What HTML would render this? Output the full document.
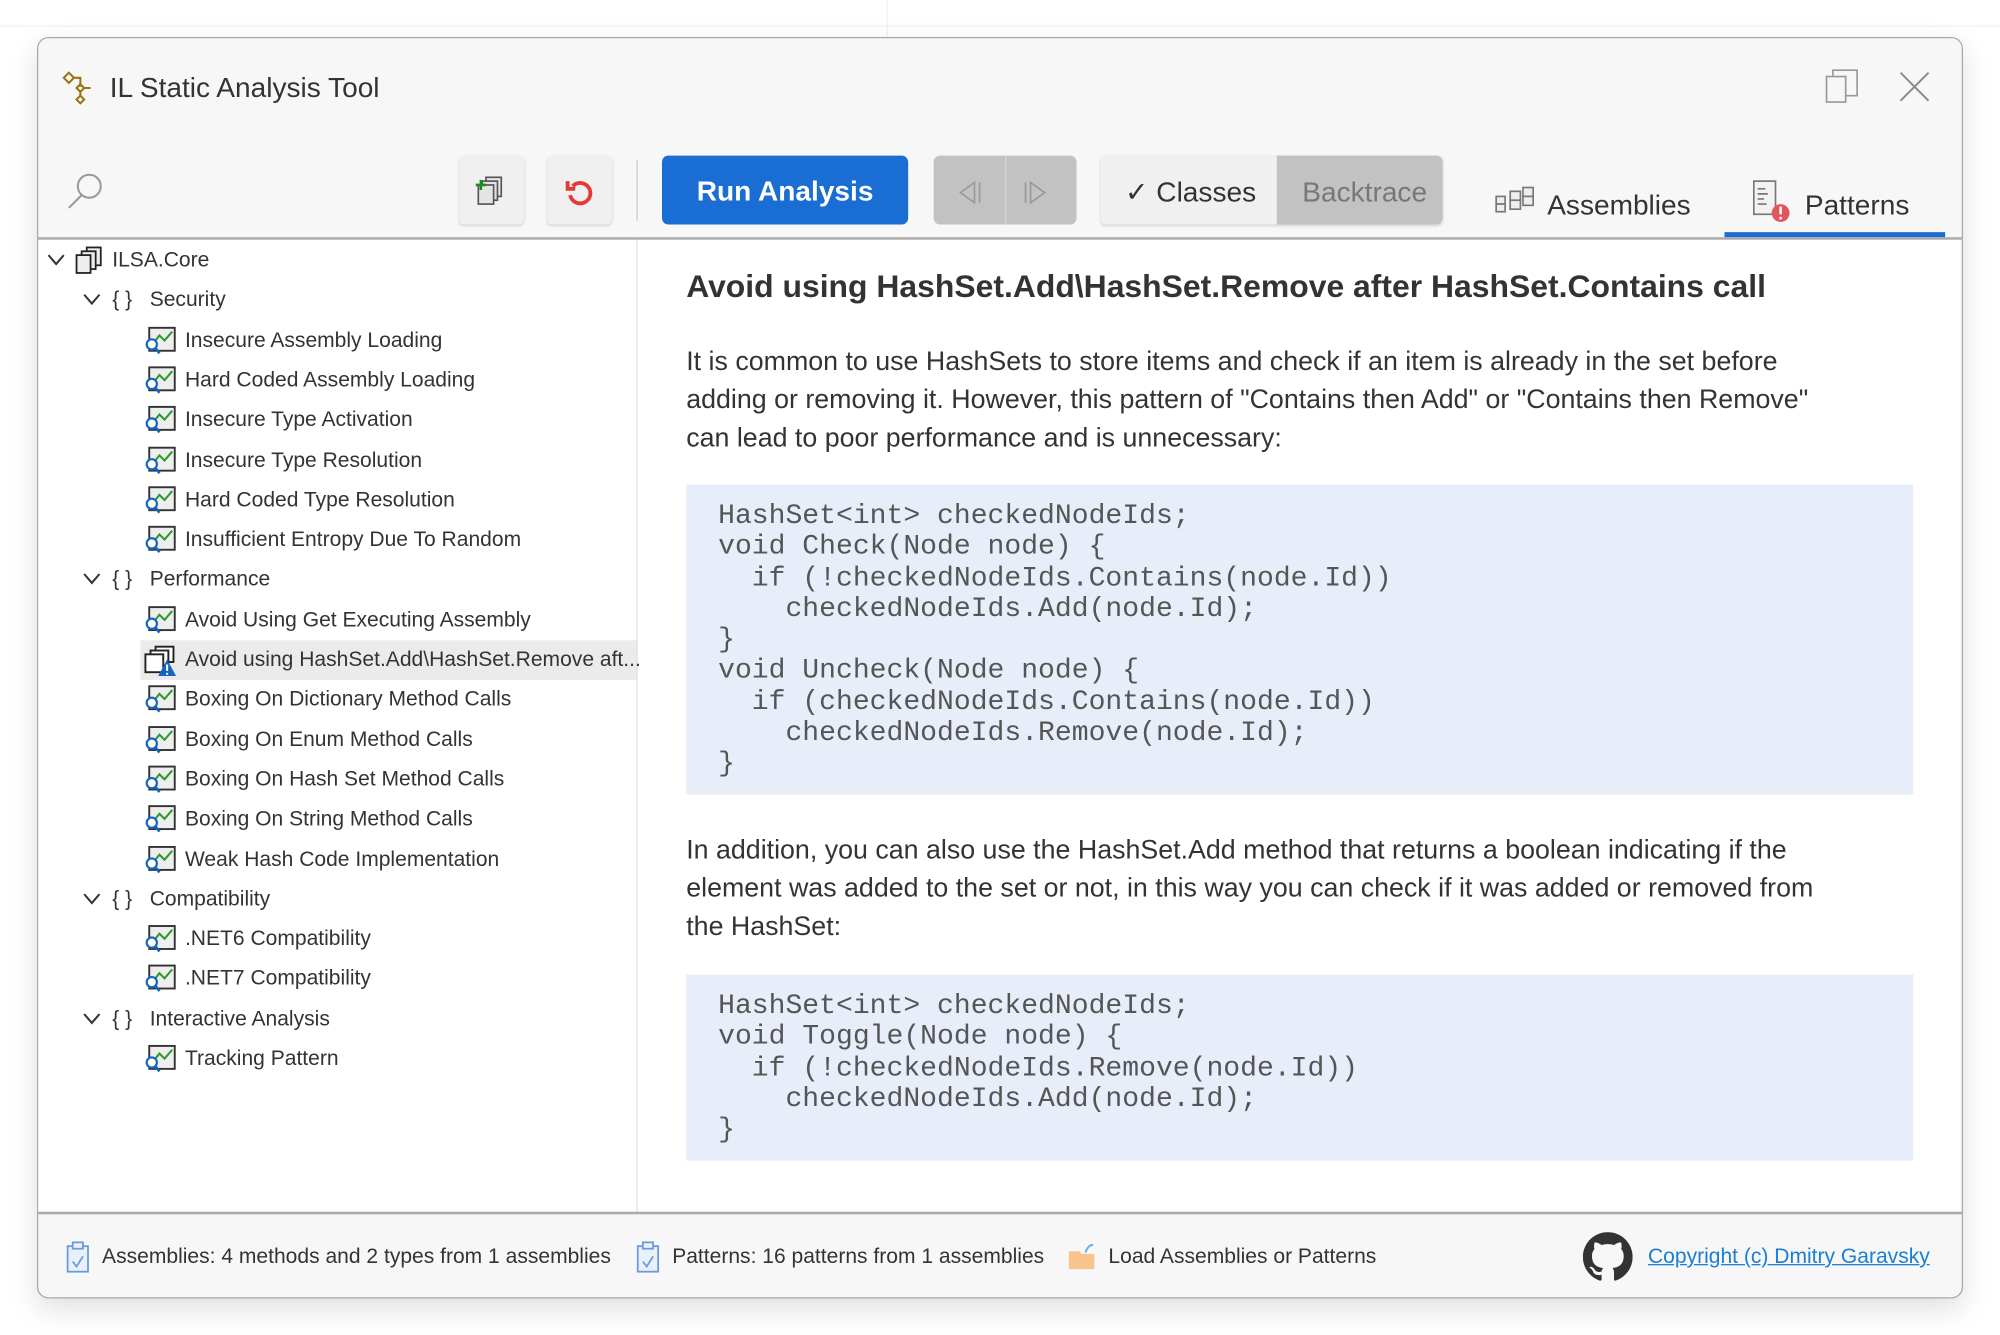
<!DOCTYPE html>
<html><head><meta charset="utf-8"><style>
html,body{margin:0;padding:0;width:2000px;height:1335px;overflow:hidden;background:#fff;}
#s{position:absolute;left:0;top:0;width:1568px;height:1047px;transform:scale(1.27551);transform-origin:0 0;font-family:"Liberation Sans",sans-serif;color:#333;}
.a{position:absolute;}
.win{left:29px;top:29px;width:1508px;height:987px;border:1px solid #a9a9a9;border-radius:9px;background:#f7f7f7;box-shadow:0 8px 22px rgba(0,0,0,.13);overflow:hidden;}
.btn{background:#f0f0f0;border-radius:4px;box-shadow:0 1px 2px rgba(0,0,0,.15);}
.row{position:absolute;font-size:16.5px;white-space:nowrap;color:#333;height:31px;line-height:31px;}
.p{font-size:21px;line-height:30px;color:#333;}
pre{margin:0;font-family:"Liberation Mono",monospace;font-size:22px;line-height:24.3px;color:#555;}
.code{background:#e7eef9;}
.st{font-size:16.5px;color:#333;position:absolute;top:976px;white-space:nowrap;}
</style></head><body><div id="s">
<div class="a" style="left:0;top:20px;width:1568px;height:1px;background:#f2f2f2"></div>
<div class="a" style="left:695px;top:0;width:1px;height:29px;background:#f0f0f0"></div>
<div class="a win"></div>
<svg class="a" style="left:49px;top:56px" width="26" height="26" viewBox="0 0 26 26" fill="none" stroke="#9a7410" stroke-width="1.6"><path d="M5 1 L9 5 L5 9 L1 5Z"/><path d="M9 5 H14 V12"/><path d="M14 10 L17 13 L14 16 L11 13Z"/><path d="M14 16 V19"/><path d="M14 19 L17 22 L14 25 L11 22Z"/><path d="M17 13 H22"/></svg>
<div class="a" style="left:86px;top:56px;font-size:22px;color:#333">IL Static Analysis Tool</div>
<svg class="a" style="left:1431px;top:54px" width="28" height="28" fill="none" stroke="#999" stroke-width="1.3"><rect x="1" y="6" width="15" height="20"/><path d="M6 6 V1 H25 V21 H16"/></svg>
<svg class="a" style="left:1488px;top:56px" width="26" height="24" stroke="#888" stroke-width="1.5"><path d="M2 1 L24 23 M24 1 L2 23"/></svg>
<svg class="a" style="left:52px;top:133px" width="32" height="32" fill="none" stroke="#999" stroke-width="1.6"><circle cx="18" cy="13" r="9"/><path d="M12 20 L2 30"/></svg>
<div class="a btn" style="left:360px;top:122px;width:51px;height:54px"></div>
<svg class="a" style="left:372px;top:137px" width="26" height="26" fill="#e4e4e4" stroke="#555" stroke-width="1.3"><rect x="9" y="2" width="12" height="15"/><rect x="6" y="5" width="12" height="15"/><rect x="3" y="8" width="12" height="15"/><path d="M1 8 H9 M5 4 V12" stroke="#1a8a1a" stroke-width="2"/></svg>
<div class="a btn" style="left:429px;top:122px;width:51px;height:54px"></div>
<svg class="a" style="left:442px;top:138px" width="26" height="26" fill="none" stroke="#e53935" stroke-width="3"><path d="M7 8 A8 8 0 1 1 5 15"/><path d="M3 4 V10 H9" stroke-width="3"/></svg>
<div class="a" style="left:499px;top:125px;width:1px;height:48px;background:#ccc"></div>
<div class="a" style="left:519px;top:122px;width:193px;height:54px;background:#1a6dd2;border-radius:5px;color:#fff;font-size:22px;font-weight:bold;text-align:center;line-height:56px">Run Analysis</div>
<div class="a" style="left:732px;top:122px;width:112px;height:54px;background:#c2c2c2;border-radius:5px"></div>
<div class="a" style="left:788px;top:122px;width:1px;height:54px;background:#d6d6d6"></div>
<svg class="a" style="left:750px;top:141px" width="80" height="20" fill="none" stroke="#999" stroke-width="1.3"><path d="M14 2 L3 10 L14 18Z M18 2 V18"/><path d="M54 2 V18 M58 2 L69 10 L58 18Z"/></svg>
<div class="a btn" style="left:863px;top:122px;width:268px;height:54px"></div>
<div class="a" style="left:1001px;top:122px;width:130px;height:54px;background:#c2c2c2;border-radius:0 5px 5px 0"></div>
<div class="a" style="left:882px;top:138px;font-size:22px;color:#333">✓ Classes</div>
<div class="a" style="left:1021px;top:138px;font-size:22px;color:#777">Backtrace</div>
<svg class="a" style="left:1172px;top:146px" width="32" height="22" fill="#eee" stroke="#777" stroke-width="1.3"><rect x="1" y="8" width="7" height="6"/><rect x="1" y="14" width="7" height="6"/><rect x="12" y="4" width="8" height="7"/><rect x="12" y="11" width="8" height="7"/><rect x="22" y="1" width="8" height="7"/><rect x="22" y="8" width="8" height="7"/></svg>
<div class="a" style="left:1213px;top:148px;font-size:22px;color:#333">Assemblies</div>
<svg class="a" style="left:1373px;top:140px" width="34" height="34"><rect x="2" y="2" width="17" height="26" fill="#f2f2f2" stroke="#777" stroke-width="1.3"/><path d="M5 8 H11 M5 12 H13 M5 16 H10 M5 20 H12" stroke="#777" stroke-width="1.3"/><circle cx="23" cy="27" r="7" fill="#e0565b"/><path d="M23 22 V28 M23 30 V32" stroke="#fff" stroke-width="2"/></svg>
<div class="a" style="left:1415px;top:148px;font-size:22px;color:#333">Patterns</div>
<div class="a" style="left:1352px;top:182px;width:173px;height:4px;background:#1a6dd2"></div>
<div class="a" style="left:30px;top:186px;width:1508px;height:2px;background:#aaa"></div>
<div class="a" style="left:30px;top:188px;width:469px;height:763px;background:#fff"></div>
<div class="a" style="left:499px;top:188px;width:1px;height:763px;background:#ddd"></div>
<div class="a" style="left:500px;top:188px;width:1037px;height:763px;background:#fff"></div>
<div class="a" style="left:30px;top:950px;width:1508px;height:2px;background:#aaa"></div>
<div class="a" style="left:110px;top:502px;width:389px;height:31px;background:#ebebeb"></div>
<svg class="a" style="left:36px;top:198px" width="16" height="12" fill="none" stroke="#333" stroke-width="1.6"><path d="M2 2 L8 9 L14 2"/></svg>
<svg class="a" style="left:59px;top:193px" width="22" height="22" fill="#eee" stroke="#222" stroke-width="1.4"><rect x="9" y="1" width="11" height="14"/><rect x="5" y="4" width="11" height="14"/><rect x="1" y="7" width="11" height="14"/></svg>
<div class="row" style="left:88px;top:189px">ILSA.Core</div>
<div id="tree"></div>
<div class="a" style="left:538px;top:211px;font-size:25px;font-weight:bold;color:#333;white-space:nowrap">Avoid using HashSet.Add\HashSet.Remove after HashSet.Contains call</div>
<div class="a p" style="left:538px;top:269px;width:890px">It is common to use HashSets to store items and check if an item is already in the set before adding or removing it. However, this pattern of "Contains then Add" or "Contains then Remove" can lead to poor performance and is unnecessary:</div>
<div class="a code" style="left:538px;top:380px;width:962px;height:243px"></div>
<pre class="a" style="left:563px;top:393px">HashSet&lt;int&gt; checkedNodeIds;
void Check(Node node) {
  if (!checkedNodeIds.Contains(node.Id))
    checkedNodeIds.Add(node.Id);
}
void Uncheck(Node node) {
  if (checkedNodeIds.Contains(node.Id))
    checkedNodeIds.Remove(node.Id);
}</pre>
<div class="a p" style="left:538px;top:652px;width:890px">In addition, you can also use the HashSet.Add method that returns a boolean indicating if the element was added to the set or not, in this way you can check if it was added or removed from the HashSet:</div>
<div class="a code" style="left:538px;top:764px;width:962px;height:146px"></div>
<pre class="a" style="left:563px;top:777px">HashSet&lt;int&gt; checkedNodeIds;
void Toggle(Node node) {
  if (!checkedNodeIds.Remove(node.Id))
    checkedNodeIds.Add(node.Id);
}</pre>
<svg class="a" style="left:51px;top:973px" width="20" height="26" fill="#e8f0fb" stroke="#6b9bd8" stroke-width="1.4"><rect x="2" y="4" width="16" height="20"/><rect x="6" y="1" width="8" height="5"/><path d="M6 16 L9 20 L14 12" fill="none"/></svg>
<div class="st" style="left:80px">Assemblies: 4 methods and 2 types from 1 assemblies</div>
<svg class="a" style="left:498px;top:973px" width="20" height="26" fill="#e8f0fb" stroke="#6b9bd8" stroke-width="1.4"><rect x="2" y="4" width="16" height="20"/><rect x="6" y="1" width="8" height="5"/><path d="M6 16 L9 20 L14 12" fill="none"/></svg>
<div class="st" style="left:527px">Patterns: 16 patterns from 1 assemblies</div>
<svg class="a" style="left:837px;top:973px" width="24" height="24"><path d="M1 8 H9 L11 10 H21 V22 H1Z" fill="#f8c48e"/><path d="M14 9 Q16 3 20 3" stroke="#6ab0e8" stroke-width="1.6" fill="none"/></svg>
<div class="st" style="left:869px">Load Assemblies or Patterns</div>
<svg class="a" style="left:1241px;top:966px" width="39" height="39" viewBox="0 0 16 16"><path fill="#333" d="M8 0C3.58 0 0 3.58 0 8c0 3.540 2.29 6.53 5.47 7.59.4.07.55-.17.55-.38 0-.19-.01-.82-.01-1.49-2.01.37-2.530-.49-2.69-.94-.09-.23-.48-.94-.82-1.130-.28-.15-.68-.52-.01-.53.63-.01 1.080.58 1.230.82.72 1.21 1.870.87 2.330.66.07-.52.28-.87.51-1.070-1.78-.2-3.64-.89-3.64-3.95 0-.87.31-1.59.82-2.15-.08-.2-.36-1.020.08-2.12 0 0 .67-.21 2.2.82.64-.18 1.32-.27 2-.27.68 0 1.360.09 2 .27 1.53-1.04 2.2-.82 2.2-.82.44 1.1.16 1.92.08 2.12.51.56.82 1.27.82 2.15 0 3.07-1.87 3.75-3.65 3.95.29.25.54.73.54 1.48 0 1.07-.01 1.93-.01 2.2 0 .21.15.46.55.38A8.013 8.013 0 0016 8c0-4.42-3.58-8-8-8z"/></svg>
<div class="st" style="left:1292px;color:#1a7fd4;text-decoration:underline">Copyright (c) Dmitry Garavsky</div>
</div>
<script>
var items=[[1,"Security"],[2,"Insecure Assembly Loading"],[2,"Hard Coded Assembly Loading"],[2,"Insecure Type Activation"],[2,"Insecure Type Resolution"],[2,"Hard Coded Type Resolution"],[2,"Insufficient Entropy Due To Random"],[1,"Performance"],[2,"Avoid Using Get Executing Assembly"],[3,"Avoid using HashSet.Add\\HashSet.Remove aft..."],[2,"Boxing On Dictionary Method Calls"],[2,"Boxing On Enum Method Calls"],[2,"Boxing On Hash Set Method Calls"],[2,"Boxing On String Method Calls"],[2,"Weak Hash Code Implementation"],[1,"Compatibility"],[2,".NET6 Compatibility"],[2,".NET7 Compatibility"],[1,"Interactive Analysis"],[2,"Tracking Pattern"]];
var h="";
var ic='<svg class="a" style="left:113px;top:TOPpx" width="26" height="24"><rect x="4" y="2" width="20" height="18" fill="#eee" stroke="#333" stroke-width="1.5"/><path d="M8 13 L12 8 L16 12 L22 5" fill="none" stroke="#2a9a2a" stroke-width="1.6"/><circle cx="6" cy="15" r="4" fill="#fff" stroke="#1565c0" stroke-width="1.7"/><path d="M9 18 L12 22" stroke="#1565c0" stroke-width="2"/></svg>';
var ic3='<svg class="a" style="left:113px;top:TOPpx" width="26" height="26"><rect x="9" y="2" width="14" height="12" fill="#fff" stroke="#222" stroke-width="1.5"/><rect x="5" y="5" width="14" height="12" fill="#fff" stroke="#222" stroke-width="1.5"/><rect x="1" y="8" width="14" height="14" fill="#fff" stroke="#222" stroke-width="1.5"/><path d="M18 12 L25 25 H11Z" fill="#1565c0"/><path d="M18 16 V21 M18 22.5 V24" stroke="#fff" stroke-width="1.6"/></svg>';
items.forEach(function(it,i){var y=189+31.3*(i+1);var c=y+15;
if(it[0]==1){h+='<svg class="a" style="left:64px;top:'+(c-6)+'px" width="16" height="12" fill="none" stroke="#333" stroke-width="1.6"><path d="M2 2 L8 9 L14 2"/></svg><div class="row" style="left:88px;top:'+y+'px">{ }&nbsp;&nbsp; '+it[1]+'</div>';}
else{h+=(it[0]==3?ic3:ic).replace("TOP",c-12)+'<div class="row" style="left:145px;top:'+y+'px">'+it[1]+'</div>';}});
document.getElementById("tree").outerHTML=h;
</script>
</body></html>
